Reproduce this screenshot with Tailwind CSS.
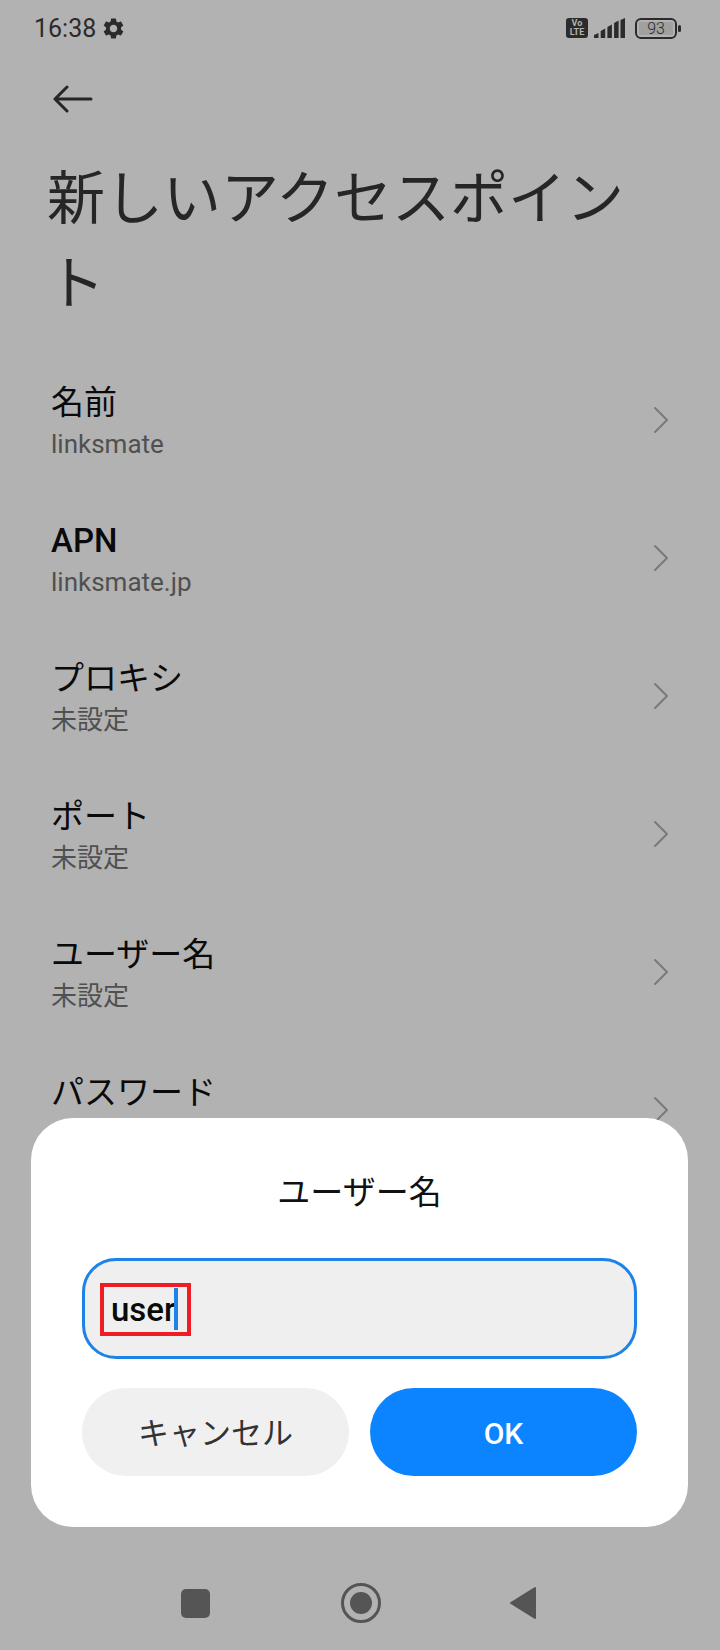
<!DOCTYPE html>
<html lang="ja">
<head>
    <meta charset="UTF-8">
    <title>新しいアクセスポイント</title>
    <script src="https://cdn.jsdelivr.net/npm/@tailwindcss/browser@4"></script>
</head>
<body class="bg-[#b2b2b2] font-['Roboto','Noto_Sans_CJK_JP',sans-serif]">
<div class="relative w-[720px] h-[1650px] overflow-hidden">

    <!-- Status bar -->
    <div class="flex justify-between items-center h-[56px] pl-[34px] pr-[39px] text-[#2b2b2b]">
        <div class="flex items-center gap-[7px]">
            <span class="text-[25px] leading-none">16:38</span>
            <svg class="w-[21px] h-[23px]" viewBox="2 1 20 22" fill="#2b2b2b"><path d="M19.14 12.94c.04-.3.06-.61.06-.94 0-.32-.02-.64-.07-.94l2.03-1.58c.18-.14.23-.41.12-.61l-1.92-3.32c-.12-.22-.37-.29-.59-.22l-2.39.96c-.5-.38-1.03-.7-1.62-.94l-.36-2.54c-.04-.24-.24-.41-.48-.41h-3.84c-.24 0-.43.17-.47.41l-.36 2.54c-.59.24-1.13.57-1.62.94l-2.39-.96c-.22-.08-.47 0-.59.22L2.74 8.87c-.12.21-.08.47.12.61l2.03 1.58c-.05.3-.09.63-.09.94s.02.64.07.94l-2.03 1.58c-.18.14-.23.41-.12.61l1.92 3.32c.12.22.37.29.59.22l2.39-.96c.5.38 1.03.7 1.62.94l.36 2.54c.05.24.24.41.48.41h3.84c.24 0 .44-.17.47-.41l.36-2.54c.59-.24 1.13-.56 1.62-.94l2.39.96c.22.08.47 0 .59-.22l1.92-3.32c.12-.22.07-.47-.12-.61l-2.01-1.58zM12 15.600c-1.980 0-3.600-1.620-3.600-3.600s1.620-3.600 3.600-3.600 3.600 1.620 3.600 3.600-1.620 3.600-3.600 3.600z"/></svg>
        </div>
        <div class="flex items-center">
            <div class="w-[22px] h-[20px] rounded-[3px] bg-[#2b2b2b] text-[#b2b2b2] text-[9px] leading-[9px] font-bold text-center pt-[1px]">Vo<br>LTE</div>
            <svg class="ml-[6px] w-[31px] h-[20px]" viewBox="0 0 31 20" fill="#2b2b2b"><path d="M0 17l4.500-2v5H0zM6.700 13l4.500-2.500V20H6.700zM13.400 9l4.500-2.500V20h-4.500zM20.100 5l4.500-2.500V20h-4.500zM26.500 2l4.500-2v20h-4.500z"/></svg>
            <div class="flex items-center gap-[1px] ml-[10px]">
                <div class="w-[42px] h-[21px] rounded-[6px] border-2 border-[#2b2b2b] p-[2px] flex">
                    <div class="w-full bg-[#a0a0a0] rounded-[1px] text-[16px] leading-[13px] text-center font-light">93</div>
                </div>
                <div class="w-[3px] h-[7px] bg-[#2b2b2b] rounded-full"></div>
            </div>
        </div>
    </div>

    <!-- Back arrow -->
    <div class="mt-[17px] h-[52px] pl-[53px] flex items-center">
        <svg class="w-[40px] h-[28px]" viewBox="0 0 40 28" fill="none" stroke="#262626" stroke-width="3" stroke-linecap="round" stroke-linejoin="round"><path d="M2 14h36M14 2 2 14l12 12"/></svg>
    </div>

    <!-- Title -->
    <h1 class="mt-[32px] pl-[47px] pr-[90px] text-[58px] leading-[85px] font-normal text-[#262626]">新しいアクセスポイント</h1>

    <!-- List -->
    <div class="mt-[24px] pl-[51px] pr-[50px]">
        <div class="flex justify-between items-center h-[138px]">
            <div class="pt-[3px]"><div class="text-[33px] leading-[44px] text-[#0a0a0a]">名前</div><div class="text-[26px] leading-[38px] text-[#505050]">linksmate</div></div>
            <svg class="w-[18px] h-[30px]" viewBox="0 0 18 30" fill="none" stroke="#7a7a7a" stroke-width="2" stroke-linecap="round" stroke-linejoin="round"><path d="m3 3 12 12L3 27"/></svg>
        </div>
        <div class="flex justify-between items-center h-[138px]">
            <div class="pt-[3px]"><div class="text-[33px] leading-[44px] font-medium text-[#0a0a0a]">APN</div><div class="text-[26px] leading-[38px] text-[#505050]">linksmate.jp</div></div>
            <svg class="w-[18px] h-[30px]" viewBox="0 0 18 30" fill="none" stroke="#7a7a7a" stroke-width="2" stroke-linecap="round" stroke-linejoin="round"><path d="m3 3 12 12L3 27"/></svg>
        </div>
        <div class="flex justify-between items-center h-[138px]">
            <div class="pt-[3px]"><div class="text-[33px] leading-[44px] text-[#0a0a0a]">プロキシ</div><div class="text-[26px] leading-[38px] text-[#505050]">未設定</div></div>
            <svg class="w-[18px] h-[30px]" viewBox="0 0 18 30" fill="none" stroke="#7a7a7a" stroke-width="2" stroke-linecap="round" stroke-linejoin="round"><path d="m3 3 12 12L3 27"/></svg>
        </div>
        <div class="flex justify-between items-center h-[138px]">
            <div class="pt-[3px]"><div class="text-[33px] leading-[44px] text-[#0a0a0a]">ポート</div><div class="text-[26px] leading-[38px] text-[#505050]">未設定</div></div>
            <svg class="w-[18px] h-[30px]" viewBox="0 0 18 30" fill="none" stroke="#7a7a7a" stroke-width="2" stroke-linecap="round" stroke-linejoin="round"><path d="m3 3 12 12L3 27"/></svg>
        </div>
        <div class="flex justify-between items-center h-[138px]">
            <div class="pt-[3px]"><div class="text-[33px] leading-[44px] text-[#0a0a0a]">ユーザー名</div><div class="text-[26px] leading-[38px] text-[#505050]">未設定</div></div>
            <svg class="w-[18px] h-[30px]" viewBox="0 0 18 30" fill="none" stroke="#7a7a7a" stroke-width="2" stroke-linecap="round" stroke-linejoin="round"><path d="m3 3 12 12L3 27"/></svg>
        </div>
        <div class="flex justify-between items-center h-[138px]">
            <div class="pt-[3px]"><div class="text-[33px] leading-[44px] text-[#0a0a0a]">パスワード</div><div class="text-[26px] leading-[38px] text-[#505050]">未設定</div></div>
            <svg class="w-[18px] h-[30px]" viewBox="0 0 18 30" fill="none" stroke="#7a7a7a" stroke-width="2" stroke-linecap="round" stroke-linejoin="round"><path d="m3 3 12 12L3 27"/></svg>
        </div>
    </div>

    <!-- Dialog -->
    <div class="absolute left-[31px] top-[1118px] w-[657px] h-[409px] bg-white rounded-[42px] px-[51px]">
        <div class="pt-[53px] h-[140px] text-center text-[33px] leading-[44px] text-[#111]">ユーザー名</div>
        <div class="relative h-[101px] rounded-[34px] border-[3px] border-[#1f82e6] bg-[#efefef]">
            <div class="absolute left-[15px] top-[22px] w-[91px] h-[53px] border-[4px] border-[#ee1c25] pl-[7px] text-[33px] leading-[46px] font-medium text-[#0a0a0a]">user<span class="absolute left-[70px] top-[1px] w-[4px] h-[42px] bg-[#1f82e6]"></span></div>
        </div>
        <div class="mt-[29px] flex gap-[21px]">
            <div class="w-[267px] h-[88px] rounded-[44px] bg-[#f0f0f0] text-[#333] text-[31px] leading-[92px] text-center">キャンセル</div>
            <div class="w-[267px] h-[88px] rounded-[44px] bg-[#0d84ff] text-white text-[30px] leading-[91px] text-center font-medium">OK</div>
        </div>
    </div>

    <!-- Nav bar -->
    <div class="absolute left-[181px] top-[1583px] w-[356px] h-[40px] flex justify-between items-center">
        <div class="w-[29px] h-[29px] rounded-[5px] bg-[#555]"></div>
        <div class="w-[40px] h-[40px] rounded-full border-[3px] border-[#555] flex items-center justify-center ml-[2px]"><div class="w-[22px] h-[22px] rounded-full bg-[#555]"></div></div>
        <svg class="w-[28px] h-[34px]" viewBox="0 0 28 34" fill="#555" stroke="#555" stroke-width="2" stroke-linejoin="round"><path d="M2 17 26 2v30z"/></svg>
    </div>
</div>
</body>
</html>
